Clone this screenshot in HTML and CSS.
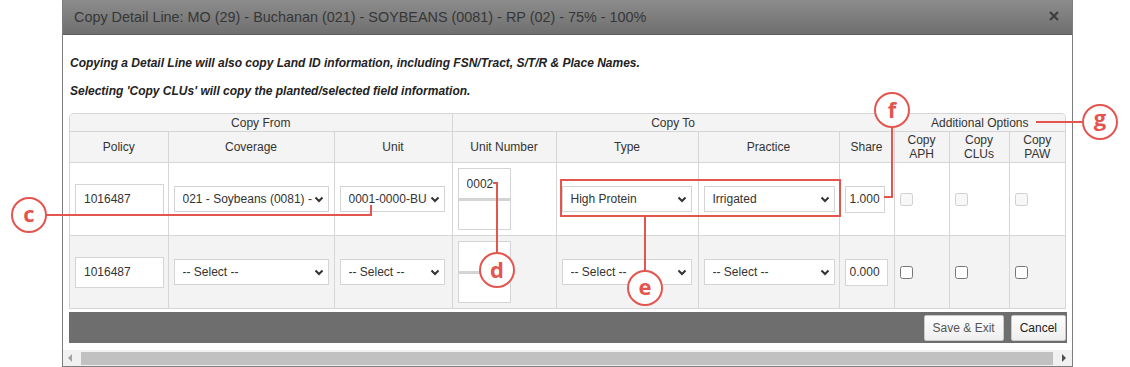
FILE: index.html
```html
<!DOCTYPE html>
<html>
<head>
    <title>Copy Detail Line</title>
    <link rel="stylesheet" href="styles.css">
</head>
<body>
    <div class="modal">
        <div class="modal-header">
            <span class="modal-title">Copy Detail Line: MO (29) - Buchanan (021) - SOYBEANS (0081) - RP (02) - 75% - 100%</span>
            <svg class="close" width="10" height="10" viewBox="0 0 10 10"><path d="M1 1 L9 9 M9 1 L1 9" stroke="#3d3d3d" stroke-width="2.2"/></svg>
        </div>
        <div class="modal-body">
            <p class="note">Copying a Detail Line will also copy Land ID information, including FSN/Tract, S/T/R &amp; Place Names.</p>
            <p class="note last">Selecting 'Copy CLUs' will copy the planted/selected field information.</p>

            <div class="grid-wrap">
                <table class="grid">
                    <colgroup>
                        <col style="width: 98px">
                        <col style="width: 166px">
                        <col style="width: 118px">
                        <col style="width: 104px">
                        <col style="width: 142px">
                        <col style="width: 141px">
                        <col style="width: 55px">
                        <col style="width: 55px">
                        <col style="width: 60px">
                        <col style="width: 56px">
                    </colgroup>
                    <tr class="group-row">
                        <th colspan="3">Copy From</th>
                        <th colspan="4">Copy To</th>
                        <th colspan="3" class="no-left">Additional Options</th>
                    </tr>
                    <tr class="col-row">
                        <th>Policy</th>
                        <th>Coverage</th>
                        <th>Unit</th>
                        <th>Unit Number</th>
                        <th>Type</th>
                        <th>Practice</th>
                        <th>Share</th>
                        <th>Copy<br>APH</th>
                        <th>Copy<br>CLUs</th>
                        <th>Copy<br>PAW</th>
                    </tr>
                    <tr class="line-row">
                        <td><input class="txt policy" type="text" value="1016487"></td>
                        <td>
                            <span class="sel"><select class="coverage"><option>021 - Soybeans (0081) - Soybeans</option></select>
                            <svg class="chev" width="10" height="7" viewBox="0 0 10 7"><path d="M1.5 1.5 L5 5 L8.5 1.5" fill="none" stroke="#333" stroke-width="2"/></svg></span>
                        </td>
                        <td>
                            <span class="sel"><select class="unit"><option>0001-0000-BU</option></select>
                            <svg class="chev" width="10" height="7" viewBox="0 0 10 7"><path d="M1.5 1.5 L5 5 L8.5 1.5" fill="none" stroke="#333" stroke-width="2"/></svg></span>
                        </td>
                        <td>
                            <div class="unit-stack">
                                <input class="unit-box" type="text" value="0002">
                                <input class="unit-box" type="text" value="">
                            </div>
                        </td>
                        <td>
                            <span class="sel"><select class="type"><option>High Protein</option></select>
                            <svg class="chev" width="10" height="7" viewBox="0 0 10 7"><path d="M1.5 1.5 L5 5 L8.5 1.5" fill="none" stroke="#333" stroke-width="2"/></svg></span>
                        </td>
                        <td>
                            <span class="sel"><select class="practice"><option>Irrigated</option></select>
                            <svg class="chev" width="10" height="7" viewBox="0 0 10 7"><path d="M1.5 1.5 L5 5 L8.5 1.5" fill="none" stroke="#333" stroke-width="2"/></svg></span>
                        </td>
                        <td><input class="txt share" type="text" value="1.000"></td>
                        <td><input type="checkbox" disabled></td>
                        <td><input type="checkbox" disabled></td>
                        <td><input type="checkbox" disabled></td>
                    </tr>
                    <tr class="line-row alt">
                        <td><input class="txt policy" type="text" value="1016487"></td>
                        <td>
                            <span class="sel"><select class="coverage"><option>-- Select --</option></select>
                            <svg class="chev" width="10" height="7" viewBox="0 0 10 7"><path d="M1.5 1.5 L5 5 L8.5 1.5" fill="none" stroke="#333" stroke-width="2"/></svg></span>
                        </td>
                        <td>
                            <span class="sel"><select class="unit"><option>-- Select --</option></select>
                            <svg class="chev" width="10" height="7" viewBox="0 0 10 7"><path d="M1.5 1.5 L5 5 L8.5 1.5" fill="none" stroke="#333" stroke-width="2"/></svg></span>
                        </td>
                        <td>
                            <div class="unit-stack">
                                <input class="unit-box" type="text" value="">
                                <input class="unit-box" type="text" value="">
                            </div>
                        </td>
                        <td>
                            <span class="sel"><select class="type"><option>-- Select --</option></select>
                            <svg class="chev" width="10" height="7" viewBox="0 0 10 7"><path d="M1.5 1.5 L5 5 L8.5 1.5" fill="none" stroke="#333" stroke-width="2"/></svg></span>
                        </td>
                        <td>
                            <span class="sel"><select class="practice"><option>-- Select --</option></select>
                            <svg class="chev" width="10" height="7" viewBox="0 0 10 7"><path d="M1.5 1.5 L5 5 L8.5 1.5" fill="none" stroke="#333" stroke-width="2"/></svg></span>
                        </td>
                        <td><input class="txt share wide" type="text" value="0.000"></td>
                        <td><input type="checkbox"></td>
                        <td><input type="checkbox"></td>
                        <td><input type="checkbox"></td>
                    </tr>
                </table>
            </div>

            <div class="action-bar">
                <button type="button" class="btn muted">Save &amp; Exit</button>
                <button type="button" class="btn">Cancel</button>
            </div>
        </div>
        <div class="hscroll">
            <span class="arrow left"></span>
            <span class="thumb"></span>
            <span class="arrow right"></span>
        </div>
    </div>

    <!-- annotation callouts -->
    <svg class="callouts" width="1130" height="367" viewBox="0 0 1130 367">
        <g fill="none" stroke="#e5554f" stroke-width="2">
            <path d="M46 215 H371 V205"/>
            <path d="M493 183 H497 V253"/>
            <rect x="561" y="180" width="279" height="36"/>
            <path d="M645 216 V271"/>
            <path d="M892 127 V197 H884"/>
            <path d="M1036 122 H1083"/>
        </g>
        <g fill="#fff" stroke="#e5554f" stroke-width="2">
            <circle cx="29" cy="215" r="17"/>
            <circle cx="497" cy="270" r="17"/>
            <circle cx="645" cy="288" r="17"/>
            <circle cx="892" cy="110" r="17"/>
            <circle cx="1100" cy="122" r="17"/>
        </g>
        <g class="callout-text" text-anchor="middle">
            <text x="29" y="222">c</text>
            <text x="497" y="278">d</text>
            <text x="645" y="295">e</text>
            <text x="892" y="118">f</text>
            <text x="1100" y="126">g</text>
        </g>
    </svg>
</body>
</html>
```

FILE: styles.css
```css
body {
    font-family: "Liberation Sans", Arial, sans-serif;
    margin: 0;
    padding: 0;
    background-color: #fff;
    color: #333;
}

.modal {
    position: relative;
    width: 1009px;
    margin-left: 62px;
    border: 1px solid #7d7d7d;
    border-top: none;
    background-color: #fff;
}

.modal-header {
    height: 35px;
    display: flex;
    align-items: center;
    justify-content: space-between;
    padding: 0 13px 0 11px;
    background: linear-gradient(#8c8c8c, #6f6f6f);
    border-bottom: 1px solid #5e5e5e;
    box-sizing: border-box;
}

.modal-title {
    font-size: 14.4px;
    color: #363636;
}

.close {
    display: block;
    margin-top: -3px;
}

.modal-body {
    padding: 21px 6px 7px 6px;
}

.note {
    margin: 0 0 14px 1px;
    font-size: 12px;
    line-height: 14px;
    font-weight: bold;
    font-style: italic;
    color: #222;
}

.note.last {
    margin-bottom: 15px;
}

.grid-wrap {
    width: 997px;
    border: 1px solid #d6d6d6;
    border-bottom: none;
    border-radius: 5px 5px 0 0;
    overflow: hidden;
    box-sizing: border-box;
}

table.grid {
    width: 100%;
    table-layout: fixed;
    border-collapse: collapse;
}

.grid th, .grid td {
    border: 1px solid #d6d6d6;
    padding: 0;
    font-size: 12px;
    font-weight: normal;
    color: #333;
}

.grid tr > :first-child {
    border-left: none;
}

.grid tr > :last-child {
    border-right: none;
}

.grid tr:first-child > * {
    border-top: none;
}

.grid th {
    background-color: #f4f4f4;
    text-align: center;
    line-height: 14px;
}

.group-row th {
    height: 17px;
}

.grid th.no-left {
    border-left: none;
}

.col-row th {
    height: 30px;
}

.line-row td {
    height: 72px;
    padding-left: 5px;
    background-color: #fff;
}

.line-row.alt td {
    background-color: #f3f3f3;
}

.txt {
    font-family: "Liberation Sans", Arial, sans-serif;
    font-size: 12px;
    color: #333;
    border: 1px solid #d4d4d4;
    background-color: #fff;
    box-sizing: border-box;
    outline: none;
    display: block;
}

.txt.policy {
    width: 89px;
    height: 31px;
    padding: 0 8px;
}

.txt.share {
    width: 40px;
    height: 27px;
    padding: 0 4px;
}

.txt.share.wide {
    width: 43px;
}

.sel {
    position: relative;
    display: inline-block;
    vertical-align: middle;
}

.sel select {
    -webkit-appearance: none;
    appearance: none;
    display: block;
    height: 26px;
    font-family: "Liberation Sans", Arial, sans-serif;
    font-size: 12px;
    color: #333;
    background-color: #fff;
    border: 1px solid #d4d4d4;
    border-radius: 0;
    padding: 0 20px 0 8px;
    box-sizing: border-box;
    outline: none;
}

.sel .chev {
    position: absolute;
    right: 5px;
    top: 10px;
    pointer-events: none;
}

select.coverage {
    width: 155px;
    padding-right: 14px;
}

select.unit {
    width: 105px;
    padding-right: 16px;
}

select.type {
    width: 130px;
}

select.practice {
    width: 131px;
}

.unit-stack {
    width: 53px;
}

.unit-box {
    display: block;
    width: 53px;
    height: 31px;
    box-sizing: border-box;
    border: 1px solid #d4d4d4;
    background-color: #fff;
    padding: 0 8px;
    font-family: "Liberation Sans", Arial, sans-serif;
    font-size: 12px;
    color: #333;
    outline: none;
}

.unit-box + .unit-box {
    border-top: 2px solid #d4d4d4;
}

.grid input[type="checkbox"] {
    margin: 0;
    width: 13px;
    height: 13px;
    display: block;
}

.action-bar {
    margin-top: 3px;
    height: 31px;
    width: 998px;
    background-color: #6e6e6e;
    display: flex;
    justify-content: flex-end;
    align-items: center;
    gap: 7px;
    padding-right: 1px;
    box-sizing: border-box;
}

.btn {
    height: 26px;
    padding: 0 8px;
    white-space: nowrap;
    font-family: "Liberation Sans", Arial, sans-serif;
    font-size: 12px;
    color: #222;
    background: linear-gradient(#fdfdfd, #efefef);
    border: 1px solid #c9c9c9;
    border-radius: 2px;
    cursor: pointer;
}

.btn.muted {
    color: #555;
    padding: 0 8px;
}

.hscroll {
    height: 16px;
    background-color: #f1f1f1;
    display: flex;
    align-items: center;
    padding: 0 6px 0 5px;
    gap: 9px;
}

.thumb {
    flex: 1;
    height: 13px;
    background-color: #c1c1c1;
}

.arrow {
    width: 0;
    height: 0;
    border-top: 4px solid transparent;
    border-bottom: 4px solid transparent;
}

.arrow.left {
    border-right: 4px solid #a3a3a3;
}

.arrow.right {
    border-left: 4px solid #505050;
}

.callouts {
    position: absolute;
    left: 0;
    top: 0;
    pointer-events: none;
}

.callout-text text {
    font-family: "Open Sans", sans-serif;
    font-weight: 700;
    font-size: 22px;
    fill: #e5554f;
}
```
